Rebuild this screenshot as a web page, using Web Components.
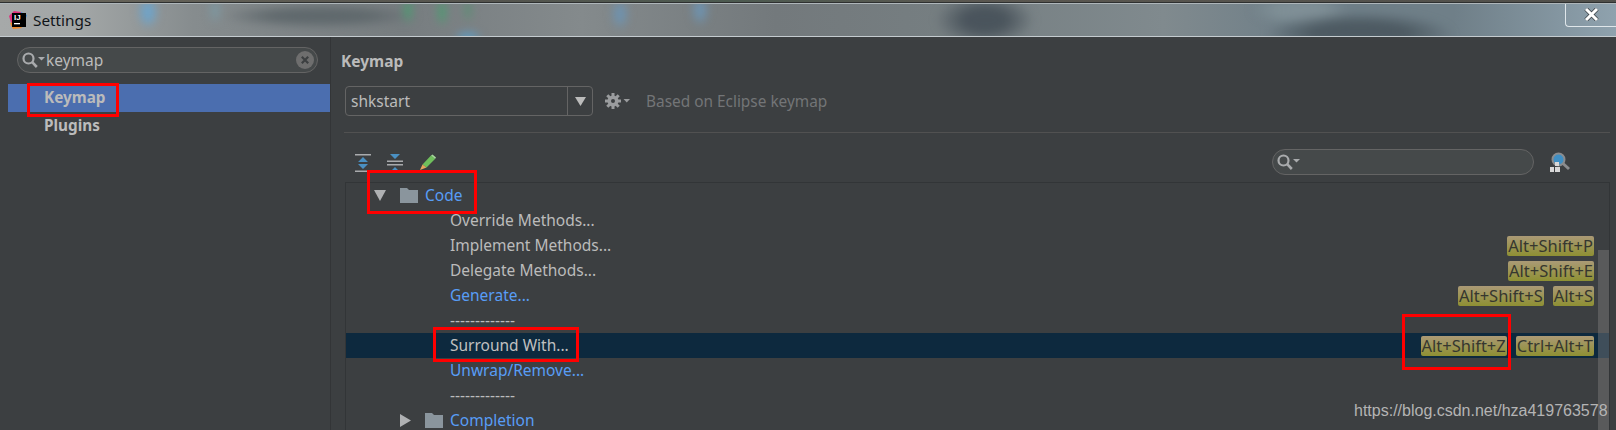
<!DOCTYPE html>
<html><head><meta charset="utf-8">
<style>
html,body{margin:0;padding:0;width:1616px;height:430px;overflow:hidden;background:#3c3f41}
body{font-family:"Noto Sans","Liberation Sans",sans-serif}
</style></head><body>
<ij-window></ij-window>
<script>
const def=(name,html,init)=>{customElements.define(name,class extends HTMLElement{
  constructor(){super();this.attachShadow({mode:'open'}).innerHTML=html;}
  connectedCallback(){if(init)init(this)}
})};
const mag=`<svg width="23" height="16" viewBox="0 0 23 16"><circle cx="6.500" cy="6.500" r="5" fill="none" stroke="#a9abad" stroke-width="2.200"/><path d="M10.200 10.200l4.600 4.800" stroke="#a9abad" stroke-width="2.600"/><path d="M16 5h7l-3.500 3.500z" fill="#a9abad"/></svg>`;

def('search-field',`<style>
:host{display:flex;align-items:center;box-sizing:border-box;height:26px;border:1px solid #646464;border-radius:13px;background:#45494a;padding:0 3px 0 4px;color:#bbb;font-size:15.500px}
svg{display:block;flex:none}
span{flex:1;margin-left:1px;line-height:22px;padding-bottom:1px}
.x{display:flex}
:host(:not([clear])) .x{display:none}
</style>${mag}<span><slot></slot></span>
<div class="x"><svg width="18" height="18" viewBox="0 0 18 18"><circle cx="9" cy="9" r="9" fill="#6e6e6e"/><path d="M5.800 5.800l6.400 6.400M12.200 5.800l-6.400 6.400" stroke="#3c3f41" stroke-width="2.200"/></svg></div>`);

def('nav-item',`<style>
:host{display:flex;align-items:center;box-sizing:border-box;height:28px;padding:0 0 3px 36px;margin-left:1px;font-weight:700;font-size:15.300px;color:#bbb}
:host([selected]){background:#4b6eaf;color:#bbb}
</style><slot></slot>`);

def('side-bar',`<style>
:host{display:block;box-sizing:border-box;width:324px;flex:none;padding-top:10px;border-right:1px solid #333537}
search-field{margin:0 12px 11px 10px}
</style><search-field clear>keymap</search-field><nav-item selected>Keymap</nav-item><nav-item>Plugins</nav-item>`);

def('key-tag',`<style>
:host{display:block;box-sizing:border-box;height:20px;padding:0 1px 1px;border-radius:2px;background:linear-gradient(#ab9a76,#8e9033);color:#36372f;font-size:16.500px;line-height:19px;white-space:nowrap}
</style><slot></slot>`);

def('tree-row',`<style>
:host{display:flex;align-items:center;height:25px;font-size:15.500px;color:#bbb;white-space:nowrap;flex:none}
:host([group]),:host([blue]){color:#589df6}
:host([selected]){background:#0d293e;color:#c0c0c0}
.lead{flex:none;display:flex;align-items:center;box-sizing:border-box;width:104px}
:host([level="0"]) .lead{width:79px}
.name{flex:1;padding-bottom:2px}
.keys{display:flex;gap:9px;margin-right:15px}
</style><div class="lead"><slot name="lead"></slot></div><div class="name"><slot></slot></div><div class="keys"><slot name="keys"></slot></div>`);

const folder=`<path d="M0 3V0h7l2 2h9v13H0z" fill="#8a959d"/>`;

def('tree-table',`<style>
:host{display:flex;flex-direction:column;position:relative;box-sizing:border-box;height:248px;border:1px solid #323537;border-width:1px 1px 0;overflow:hidden;margin-right:6px;margin-left:2px}
.bar{position:absolute;right:0;top:67px;bottom:0;width:11px;background:rgba(125,125,125,.45)}
.code{display:flex;align-items:center;gap:14px;padding-left:28px}
.comp{display:flex;align-items:center;gap:14px;padding-left:54px}
svg{display:block}
</style>
<tree-row level="0" group><span slot="lead" class="code"><svg width="12" height="13" viewBox="0 0 12 13"><path d="M0 1h12L6 12z" fill="#afb1b3"/></svg><svg width="18" height="15" viewBox="0 0 18 15">${folder}</svg></span>Code</tree-row>
<tree-row>Override Methods...</tree-row>
<tree-row>Implement Methods...<key-tag slot="keys">Alt+Shift+P</key-tag></tree-row>
<tree-row>Delegate Methods...<key-tag slot="keys">Alt+Shift+E</key-tag></tree-row>
<tree-row blue>Generate...<key-tag slot="keys">Alt+Shift+S</key-tag><key-tag slot="keys">Alt+S</key-tag></tree-row>
<tree-row>-------------</tree-row>
<tree-row selected>Surround With...<key-tag slot="keys">Alt+Shift+Z</key-tag><key-tag slot="keys">Ctrl+Alt+T</key-tag></tree-row>
<tree-row blue>Unwrap/Remove...</tree-row>
<tree-row>-------------</tree-row>
<tree-row group><span slot="lead" class="comp"><svg width="11" height="13" viewBox="0 0 11 13"><path d="M0 0l11 6.500L0 13z" fill="#afb1b3"/></svg><svg width="18" height="15" viewBox="0 0 18 15">${folder}</svg></span>Completion</tree-row>
<div class="bar"></div>`);

def('combo-box',`<style>
:host{display:flex;box-sizing:border-box;width:248px;height:30px;border:1px solid #646464;border-radius:4px;align-items:stretch;color:#bbb;font-size:15.500px}
.t{flex:1;padding-left:5px;line-height:28px}
.b{width:24px;border-left:1px solid #646464;display:flex;align-items:center;justify-content:center}
</style><div class="t"><slot></slot></div><div class="b"><svg width="11" height="9" viewBox="0 0 11 9"><path d="M0 0h11L5.500 9z" fill="#bbb"/></svg></div>`);

def('keymap-panel',`<style>
:host{display:flex;flex-direction:column;flex:1;min-width:0;padding:14px 0 0 12px;box-sizing:border-box;height:393px}
h2{margin:0 0 15px;font-size:15.500px;font-weight:700;line-height:20px;color:#bbb;margin-left:-2px}
.row{display:flex;align-items:center;margin-left:2px;height:30px}
.gear{display:flex;margin-left:12px}
.based{margin-left:15px;font-size:15.400px;color:#737577}
hr{margin:16px 6px 0 1px;height:1px;border:0;background:#515151}
.tools{display:flex;align-items:flex-start;padding:16px 0 7px;height:26px}
.ic{display:flex;gap:16px;margin:5px 0 0 12px;flex:1}
svg{display:block}
search-field{width:262px;padding-left:4px}
.find{margin:3px 46px 0 16px}
</style>
<h2>Keymap</h2>
<div class="row"><combo-box>shkstart</combo-box>
<div class="gear"><svg width="26" height="18" viewBox="0 0 26 18"><g fill="#9a9c9e"><circle cx="8" cy="9" r="5.500"/><g stroke="#9a9c9e" stroke-width="3"><path d="M8 1v16M0 9h16M2.300 3.300l11.400 11.400M13.700 3.300L2.300 14.700"/></g><path d="M18.500 7h6.500l-3.250 3.500z"/></g><circle cx="8" cy="9" r="2" fill="#3c3f41"/></svg></div>
<div class="based">Based on Eclipse keymap</div></div>
<hr>
<div class="tools"><div class="ic">
<svg width="16" height="18" viewBox="0 0 16 18"><path d="M0 .750h16M0 17.250h16" stroke="#a9abad" stroke-width="1.500"/><path d="M8 3l5 5H3zM8 15l-5-5h10z" fill="#4a90c2"/></svg>
<svg width="16" height="18" viewBox="0 0 16 18"><path d="M0 7.250h16M0 10.750h16" stroke="#a9abad" stroke-width="1.500"/><path d="M3 0h10L8 5zM8 13l5 5H3z" fill="#4a90c2"/></svg>
<svg width="17" height="16" viewBox="0 0 17 16"><path d="M3.500 10.500L12 1.500l4 3.500-8.500 8.500z" fill="#6fbf5c"/><path d="M12 1.500l4 3.500 1-1.500-3.500-3z" fill="#a5d99a"/><path d="M3.500 10.500l4 3L1 16z" fill="#e8a45c"/></svg>
</div>
<search-field></search-field>
<svg class="find" width="20" height="20" viewBox="0 0 20 20"><circle cx="8.500" cy="7.500" r="6" fill="#3f8fc4" stroke="#8a8c8e" stroke-width="2"/><path d="M13 11.500l6 5.500" stroke="#8a8c8e" stroke-width="3"/><path d="M5 10h4v4H5zM0 15h4v5H0zM5 15h5v5H5z" fill="#d8d8d8"/></svg></div>
<tree-table></tree-table>`);

def('red-box',`<style>:host{position:absolute;box-sizing:border-box;border:3px solid #f00;z-index:5;left:var(--x);top:var(--y);width:var(--w);height:var(--h)}</style>`);

def('ij-window',`<style>
:host{display:block;position:relative;width:1616px;height:430px;overflow:hidden;font-family:"Noto Sans","Liberation Sans",sans-serif}
.desk{height:3px;background:linear-gradient(90deg,#6a675c,#55544e 30%,#4c5a50 45%,#5a5750 60%,#504f4a 100%);border-bottom:1px solid #2e3030;box-sizing:border-box}
.top{height:34px;box-sizing:border-box;position:relative;overflow:hidden;border-top:1px solid #aeb6ba;border-bottom:1px solid #c5ccd0;
 background:linear-gradient(90deg,#a6a9a9 0,#a2a6a6 5%,#868c8e 12%,#777d80 25%,#848a8c 36%,#73797c 48%,#767f82 60%,#808a8e 72%,#6f7f88 80%,#6f7f88 90%,#8fa2ae 100%)}
.haze{position:absolute;inset:-6px;filter:blur(4px);background:
 radial-gradient(10px 16px at 154px 14px,#6fa3c8 50%,transparent),
 radial-gradient(6px 14px at 221px 12px,#7d97a0 50%,transparent),
 radial-gradient(5px 14px at 414px 12px,#4f9a72 50%,transparent),
 radial-gradient(5px 14px at 448px 14px,#4f9a72 50%,transparent),
 radial-gradient(4px 12px at 474px 12px,#5b8f74 50%,transparent),
 radial-gradient(9px 16px at 626px 16px,#6e93b0 40%,transparent),
 radial-gradient(9px 16px at 706px 12px,#6e93b0 40%,transparent),
 radial-gradient(14px 6px at 474px 39px,#5f9bc0 50%,transparent),
 radial-gradient(100px 12px at 326px 18px,#5f686c 50%,transparent),
 radial-gradient(50px 26px at 991px 22px,#4a545c 40%,transparent),
 radial-gradient(95px 22px at 1366px 36px,#4d5a62 50%,transparent),
 radial-gradient(50px 16px at 1306px 12px,#7f8f96 50%,transparent)}
.bar{position:relative;display:flex;align-items:center;height:32px;padding-left:9px}
.title{margin-left:6px;font-size:15.300px;color:#101418;padding-bottom:1px}
.close{position:absolute;right:0;top:-1px;width:51px;height:24px;box-sizing:border-box;border:1px solid #dfe6ea;border-top:0;border-right:0;border-radius:0 0 0 4px;display:flex;align-items:center;justify-content:center}
.body{display:flex;margin-left:7px;height:393px;background:#3c3f41}
.mark{position:absolute;left:1354px;top:401px;font:16px/20px "Liberation Sans",sans-serif;color:#b4b4b4;z-index:6;white-space:nowrap}
svg{display:block}
</style>
<div class="desk"></div>
<div class="top"><div class="haze"></div><div class="bar">
<svg width="18" height="18" viewBox="0 0 18 18"><path d="M0 5L5 0l7 1-2 8-7 6z" fill="#e0307c"/><path d="M12 1l6 3-2 6-5-3z" fill="#3b8fe0"/><path d="M1 12l3 6 9-1-6-7z" fill="#f08a2a"/><rect x="3" y="2" width="14" height="14" fill="#000"/><text x="5" y="9" font-family="Liberation Sans" font-size="8" font-weight="700" fill="#fff">IJ</text><rect x="5" y="12" width="6" height="1.300" fill="#fff"/></svg>
<span class="title">Settings</span></div>
<div class="close"><svg width="15" height="13" viewBox="0 0 15 13"><path d="M2 1l11 11M13 1L2 12" stroke="#3c4246" stroke-width="4.500"/><path d="M2 1l11 11M13 1L2 12" stroke="#fff" stroke-width="3"/></svg></div></div>
<div class="body"><side-bar></side-bar><keymap-panel></keymap-panel></div>
<red-box style="--x:27px;--y:83px;--w:92px;--h:34px"></red-box>
<red-box style="--x:367px;--y:170px;--w:110px;--h:44px"></red-box>
<red-box style="--x:433px;--y:327px;--w:146px;--h:35px"></red-box>
<red-box style="--x:1402px;--y:314px;--w:109px;--h:56px"></red-box>
<div class="mark">https://blog.csdn.net/hza419763578</div>`);
</script>
</body></html>
